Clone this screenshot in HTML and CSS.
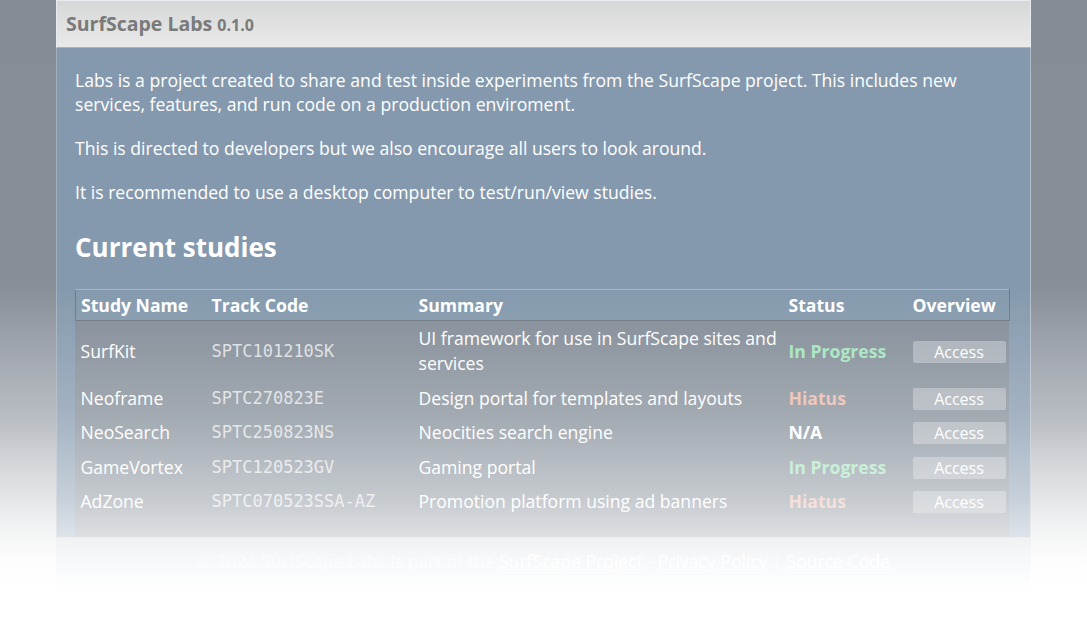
FILE: index.html
```html
<!DOCTYPE html>
<html lang="en">
<head>
<meta charset="utf-8">
<title>SurfScape Labs</title>
<link rel="stylesheet" href="styles.css">
</head>
<body>
<div class="card">
  <header class="card-head">
    <h1 class="brand">SurfScape Labs <span class="version">0.1.0</span></h1>
  </header>
  <main class="card-body">
    <p>Labs is a project created to share and test inside experiments from the SurfScape project. This includes new services, features, and run code on a production enviroment.</p>
    <p>This is directed to developers but we also encourage all users to look around.</p>
    <p>It is recommended to use a desktop computer to test/run/view studies.</p>
    <h2 class="section-title">Current studies</h2>
    <div class="table-wrap">
      <table class="studies">
        <colgroup>
          <col class="c-name"><col class="c-code"><col class="c-sum"><col class="c-status"><col class="c-over">
        </colgroup>
        <thead>
          <tr><th>Study Name</th><th>Track Code</th><th>Summary</th><th>Status</th><th>Overview</th></tr>
        </thead>
        <tbody>
          <tr><td>SurfKit</td><td class="code">SPTC101210SK</td><td>UI framework for use in SurfScape sites and services</td><td class="status progress">In Progress</td><td><a class="btn" href="#">Access</a></td></tr>
          <tr><td>Neoframe</td><td class="code">SPTC270823E</td><td>Design portal for templates and layouts</td><td class="status hiatus">Hiatus</td><td><a class="btn" href="#">Access</a></td></tr>
          <tr><td>NeoSearch</td><td class="code">SPTC250823NS</td><td>Neocities search engine</td><td class="status na">N/A</td><td><a class="btn" href="#">Access</a></td></tr>
          <tr><td>GameVortex</td><td class="code">SPTC120523GV</td><td>Gaming portal</td><td class="status progress">In Progress</td><td><a class="btn" href="#">Access</a></td></tr>
          <tr><td>AdZone</td><td class="code">SPTC070523SSA-AZ</td><td>Promotion platform using ad banners</td><td class="status hiatus">Hiatus</td><td><a class="btn" href="#">Access</a></td></tr>
        </tbody>
      </table>
    </div>
  </main>
  <footer class="foot">
    © 2024 SurfScape Labs is part of the <a href="#">SurfScape Project</a> - <a href="#">Privacy Policy</a> | <a href="#">Source Code</a>
  </footer>
</div>
</body>
</html>
```
FILE: styles.css
```css
html, body {
  margin: 0;
  padding: 0;
}
body {
  min-height: 633px;
  background: linear-gradient(#858c95 0, #878e98 280px, #a0a6ae 420px, #c5c8cc 500px, #eceef0 560px, #ffffff 600px);
  font-family: "Open Sans", "Noto Sans", sans-serif;
  font-size: 17.6px;
  line-height: 24px;
  color: #ffffff;
}
body::after {
  content: "";
  position: fixed;
  inset: 0;
  pointer-events: none;
  background: linear-gradient(rgba(255,255,255,0) 0, rgba(255,255,255,0) 285px, rgba(255,255,255,0.1) 340px, rgba(255,255,255,0.27) 420px, rgba(255,255,255,0.55) 500px, rgba(255,255,255,0.84) 560px, rgba(255,255,255,1) 598px);
}
.card {
  width: 975px;
  margin: 0 auto;
}
.card-head {
  height: 45px;
  border: 1px solid #e9ecee;
  border-bottom: 1px solid #a7b4c2;
  background: linear-gradient(#d6d8d7, #e9e9e9);
  display: flex;
  align-items: center;
  padding: 1px 9px 0;
}
.brand {
  margin: 0;
  font-size: 19.5px;
  font-weight: 700;
  color: #7a7a7a;
  line-height: 24px;
}
.version {
  font-size: 16px;
}
.card-body {
  background: #8599ae;
  border-left: 1px solid #a4b0bd;
  border-right: 1px solid #b3bec9;
  border-bottom: 1px solid #b8c4d0;
  padding: 0 21px 0 18px;
  overflow: hidden;
}
.card-body p {
  margin: 20px 0;
}
.section-title {
  font-size: 26px;
  line-height: 34px;
  font-weight: 700;
  margin: 26px 0 25px;
}
.table-wrap {
  padding-bottom: 18px;
  background: linear-gradient(rgba(0,0,0,0) 0, rgba(0,0,0,0) 32px, rgba(128,128,128,0.5) 32px);
}
.studies {
  width: 934px;
  border-collapse: collapse;
  table-layout: fixed;
}
.c-name { width: 131px; }
.c-code { width: 207px; }
.c-sum { width: 370px; }
.c-status { width: 124px; }
.c-over { width: 102px; }
.studies thead tr {
  background: #8499ad;
  border: 1px solid #6d7782;
  border-top-color: #9cb7d2;
}
.studies th {
  text-align: left;
  font-weight: 700;
  padding: 3px 5px;
  line-height: 24px;
}
.studies td {
  padding: 5px 5px 4.5px;
  line-height: 25px;
  vertical-align: middle;
}
.studies td.code {
  font-family: "DejaVu Sans Mono", "Liberation Mono", monospace;
  font-size: 17px;
  color: rgba(255,255,255,0.72);
  vertical-align: top;
  padding-top: 5px;
}
.studies tbody tr:first-child td.code {
  vertical-align: middle;
}
.status {
  font-weight: 700;
}
.progress { color: #a2e4bc; }
.hiatus { color: #e9b8aa; }
.na { color: #ffffff; }
.btn {
  display: block;
  width: 93px;
  height: 22px;
  line-height: 23px;
  margin-top: 1px;
  text-align: center;
  background: rgba(255,255,255,0.3);
  border-radius: 2px;
  color: #ffffff;
  text-decoration: none;
  font-size: 16px;
}
.foot {
  background: rgba(133,153,174,0.3);
  text-align: center;
  padding: 11px 0 20px;
  color: rgba(255,255,255,0.55);
}
.foot a {
  color: #ffffff;
  text-decoration: underline;
}
```
